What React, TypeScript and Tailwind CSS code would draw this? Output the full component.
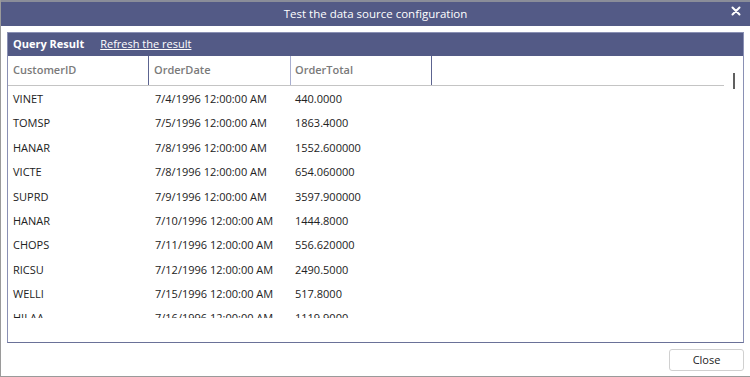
import React from 'react';

const rows: [string, string, string][] = [
  ['VINET', '7/4/1996 12:00:00 AM', '440.0000'],
  ['TOMSP', '7/5/1996 12:00:00 AM', '1863.4000'],
  ['HANAR', '7/8/1996 12:00:00 AM', '1552.600000'],
  ['VICTE', '7/8/1996 12:00:00 AM', '654.060000'],
  ['SUPRD', '7/9/1996 12:00:00 AM', '3597.900000'],
  ['HANAR', '7/10/1996 12:00:00 AM', '1444.8000'],
  ['CHOPS', '7/11/1996 12:00:00 AM', '556.620000'],
  ['RICSU', '7/12/1996 12:00:00 AM', '2490.5000'],
  ['WELLI', '7/15/1996 12:00:00 AM', '517.8000'],
  ['HILAA', '7/16/1996 12:00:00 AM', '1119.9000'],
];

export default function App() {
  return (
    <div
      className="w-[750px] h-[377px] bg-white flex flex-col border-l border-b border-[#9a9a9a] overflow-hidden text-[#222]"
      style={{ fontFamily: '"Open Sans", "Noto Sans", sans-serif' }}
    >
      {/* Title bar */}
      <div className="h-[26px] shrink-0 bg-[#535a86] border-t-2 border-[#8a8d99] relative flex items-center justify-center">
        <span className="text-white text-[11.5px]">Test the data source configuration</span>
        <button className="absolute right-[9px] top-[4px] text-white">
          <svg width="10" height="10" viewBox="0 0 10 10">
            <path d="M1.5 1.5 L8.5 8.5 M8.5 1.5 L1.5 8.5" stroke="white" strokeWidth="2" strokeLinecap="round" />
          </svg>
        </button>
      </div>

      {/* Content */}
      <div className="flex-1 flex flex-col px-[6px] pt-[6px] pb-[6px]">
        <div className="h-[311px] flex flex-col border border-[#8a90b4] border-b-[#6a7198]">
          {/* Panel header */}
          <div className="h-[23px] shrink-0 bg-[#535a86] flex items-center px-[5px] gap-[16px] text-white text-[11px]">
            <span className="font-bold">Query Result</span>
            <span className="underline">Refresh the result</span>
          </div>

          {/* Grid */}
          <div className="relative flex-1 overflow-hidden">
            <div className="flex h-[30px] border-b border-[#c4c4c4] w-[716px] text-[11px] font-semibold text-[#7a7a7a]">
              <div className="w-[141px] border-r border-[#5c6490] flex items-center px-[5px]">CustomerID</div>
              <div className="w-[142px] border-r border-[#a8aed0] flex items-center px-[5px]">OrderDate</div>
              <div className="w-[141px] border-r border-[#5c6490] flex items-center px-[4px]">OrderTotal</div>
              <div className="flex-1" />
            </div>
            <div className="absolute right-[8px] top-[17px] w-[2px] h-[16px] bg-[#606060]" />
            <div className="h-[232px] overflow-hidden pt-[1px] text-[11px]">
              {rows.map((r, i) => (
                <div key={i} className="flex h-[24.4px] items-center">
                  <div className="w-[142px] px-[5px]">{r[0]}</div>
                  <div className="w-[141px] px-[5px]">{r[1]}</div>
                  <div className="w-[141px] px-[4px]">{r[2]}</div>
                </div>
              ))}
            </div>
          </div>
        </div>

        {/* Footer */}
        <div className="flex justify-end mt-[6px]">
          <button className="w-[75px] h-[22px] border border-[#d0d0d0] rounded-[3px] bg-white text-[11px] text-[#222]">
            Close
          </button>
        </div>
      </div>
    </div>
  );
}
